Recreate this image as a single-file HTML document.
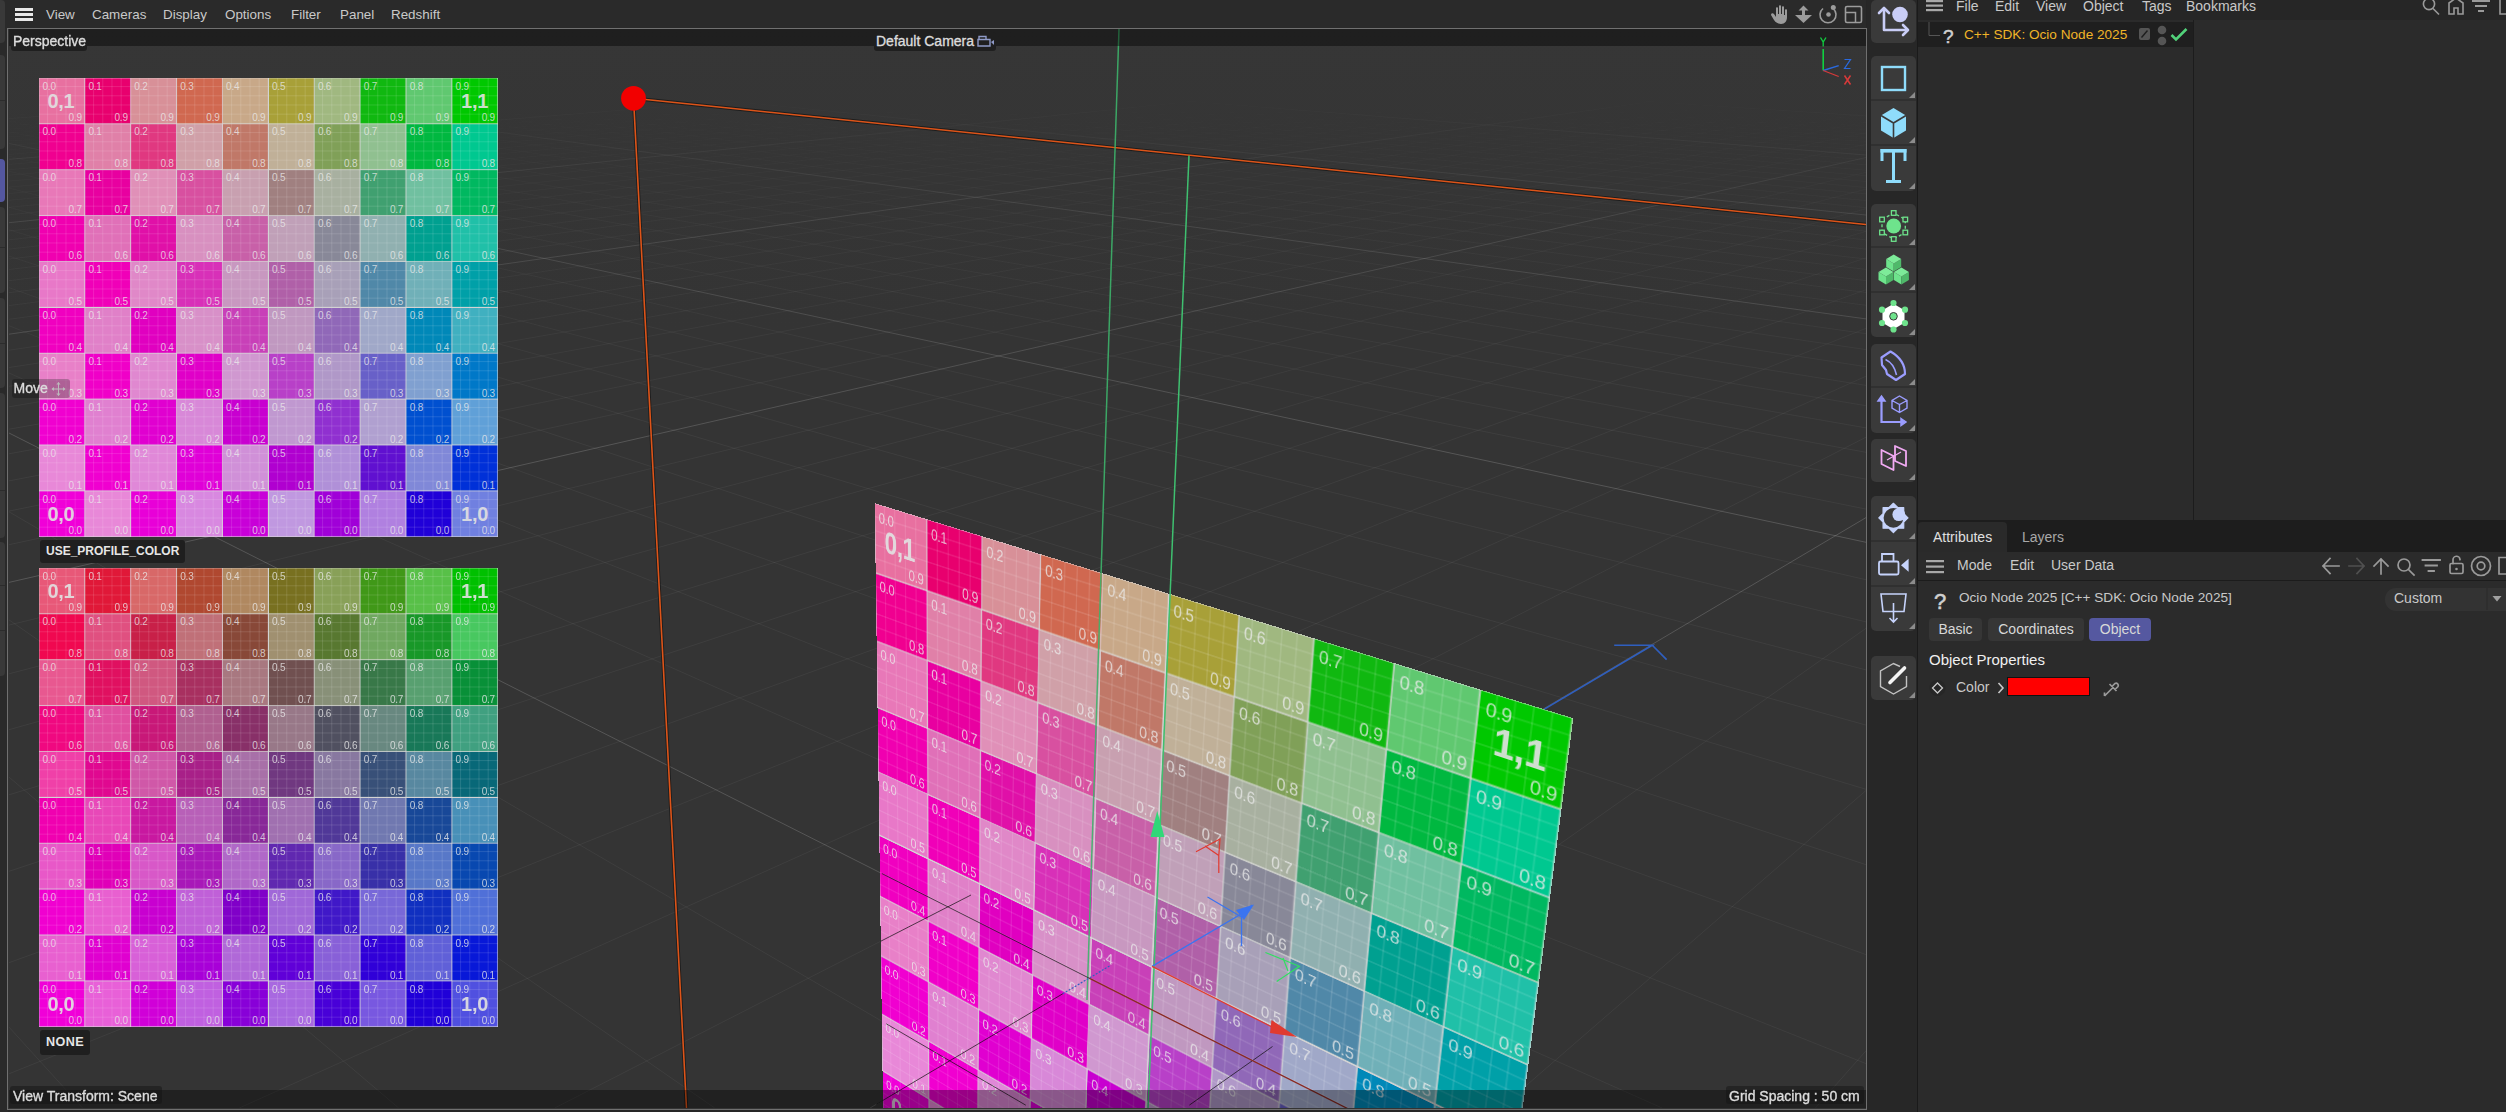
<!DOCTYPE html><html><head><meta charset="utf-8"><style>
*{box-sizing:border-box}
html,body{margin:0;padding:0}
body{width:2506px;height:1112px;overflow:hidden;position:relative;background:#262626;font-family:"Liberation Sans", sans-serif;color:#c8c8c8}
.a{position:absolute}
.g{position:absolute;background:#ccc}
.c{position:absolute;overflow:hidden;background-image:linear-gradient(to right,rgba(255,255,255,.13) 1px,transparent 1px),linear-gradient(to bottom,rgba(255,255,255,.13) 1px,transparent 1px);background-size:9.18px 9.18px;background-position:-1px -1px}
.c span{position:absolute;font-size:10px;line-height:10px;color:rgba(235,235,235,.78);letter-spacing:-0.2px}
.tl{left:3.5px;top:3.5px}
.br{right:3px;bottom:0.5px}
.gl{position:absolute;left:0;top:0;right:0;bottom:0;background-image:linear-gradient(to right,rgba(215,215,215,.75) 1.3px,transparent 1.3px),linear-gradient(to bottom,rgba(215,215,215,.75) 1.3px,transparent 1.3px);background-size:45.9px 45.9px;background-position:-0.6px -0.6px}
.pl .c{background-image:linear-gradient(to right,rgba(255,255,255,.11) 0.8px,transparent 0.8px),linear-gradient(to bottom,rgba(255,255,255,.11) 0.8px,transparent 0.8px)}
.pl .gl{background-image:linear-gradient(to right,rgba(215,215,215,.7) 1px,transparent 1px),linear-gradient(to bottom,rgba(215,215,215,.7) 1px,transparent 1px)}
.big{position:absolute;font-size:20px;line-height:20px;font-weight:bold;color:rgba(225,225,225,.92);letter-spacing:-0.3px}
.lbl{position:absolute;white-space:nowrap;background:#1e1e1e;color:#e6e6e6;font-size:13px;border-radius:3px;padding:0 5px;height:22px;line-height:22px}
.mi{position:absolute;font-size:13.4px;color:#c9c9c9;top:7px}
</style></head><body>
<div class="a" style="left:0;top:0;width:8px;height:1112px;background:#2a2a2a"></div>
<div class="a" style="left:0;top:0px;width:5px;height:43px;background:#393939;border-radius:0 4px 4px 0"></div>
<div class="a" style="left:0;top:55px;width:5px;height:94px;background:#393939;border-radius:0 4px 4px 0"></div>
<div class="a" style="left:0;top:159px;width:5px;height:43px;background:#5457a0;border-radius:0 4px 4px 0"></div>
<div class="a" style="left:0;top:207px;width:5px;height:86px;background:#393939;border-radius:0 4px 4px 0"></div>
<div class="a" style="left:0;top:298px;width:5px;height:90px;background:#393939;border-radius:0 4px 4px 0"></div>
<div class="a" style="left:0;top:393px;width:5px;height:145px;background:#393939;border-radius:0 4px 4px 0"></div>
<div class="a" style="left:0;top:542px;width:5px;height:134px;background:#393939;border-radius:0 4px 4px 0"></div>
<div class="a" style="left:0;top:100px;width:5px;height:1px;background:#2c2c2c"></div>
<div class="a" style="left:0;top:247px;width:5px;height:1px;background:#2c2c2c"></div>
<div class="a" style="left:0;top:343px;width:5px;height:1px;background:#2c2c2c"></div>
<div class="a" style="left:0;top:490px;width:5px;height:1px;background:#2c2c2c"></div>
<div class="a" style="left:0;top:585px;width:5px;height:1px;background:#2c2c2c"></div>
<div class="a" style="left:0;top:630px;width:5px;height:1px;background:#2c2c2c"></div>
<div class="a" style="left:8px;top:0;width:1858px;height:28px;background:#2a2a2a"></div>
<div class="a" style="left:15px;top:8px;width:18px;height:3px;background:#e8e8e8;box-shadow:0 5px 0 #e8e8e8,0 10px 0 #e8e8e8"></div>
<span class="mi" style="left:46px">View</span>
<span class="mi" style="left:92px">Cameras</span>
<span class="mi" style="left:163px">Display</span>
<span class="mi" style="left:225px">Options</span>
<span class="mi" style="left:291px">Filter</span>
<span class="mi" style="left:340px">Panel</span>
<span class="mi" style="left:391px">Redshift</span>
<div class="a" style="left:7px;top:28px;width:1860px;height:1082px;border:1px solid #707070;background:#343434"></div>
<div class="a" id="vp" style="left:0;top:0;width:2506px;height:1112px;clip-path:inset(29px 640px 4px 8px)">
<div class="a" style="left:9px;top:29px;width:1857px;height:300px;background:linear-gradient(#363636,#343434)"></div>
<svg class="a" style="left:0;top:0" width="2506" height="1112"><defs><linearGradient id="fade" x1="0" y1="0" x2="0" y2="1112" gradientUnits="userSpaceOnUse"><stop offset="0.085" stop-color="#fff" stop-opacity="0"/><stop offset="0.2" stop-color="#fff" stop-opacity="0.6"/><stop offset="0.4" stop-color="#fff" stop-opacity="1"/></linearGradient><mask id="fm"><rect x="0" y="0" width="2506" height="1112" fill="url(#fade)"/></mask></defs><g mask="url(#fm)">
<path d="M1866.0 40.8L1564.1 29.0M1866.0 42.0L1538.0 29.0M1866.0 43.2L1511.9 29.0M1866.0 44.4L1485.8 29.0M1866.0 45.6L1459.7 29.0M1866.0 46.9L1433.5 29.0M1866.0 48.2L1407.4 29.0M1866.0 49.5L1381.2 29.0M1866.0 50.8L1355.1 29.0M1866.0 53.6L1302.7 29.0M1866.0 55.1L1276.6 29.0M1866.0 56.5L1250.4 29.0M1866.0 58.1L1224.2 29.0M1866.0 59.6L1198.0 29.0M1866.0 61.2L1171.7 29.0M1866.0 62.8L1145.5 29.0M1866.0 64.5L1119.3 29.0M1866.0 66.2L1093.0 29.0M1866.0 69.8L1040.5 29.0M1866.0 71.6L1014.3 29.0M1866.0 73.5L988.0 29.0M1866.0 75.4L961.7 29.0M1866.0 77.4L935.4 29.0M1866.0 79.5L909.1 29.0M1866.0 81.6L882.8 29.0M1866.0 83.8L856.5 29.0M1866.0 86.0L830.2 29.0M1866.0 90.7L777.5 29.0M1866.0 93.2L751.2 29.0M1866.0 95.7L724.8 29.0M1866.0 98.3L698.4 29.0M1866.0 101.0L672.1 29.0M1866.0 103.8L645.7 29.0M1866.0 106.7L619.3 29.0M1866.0 109.6L592.9 29.0M1866.0 112.7L566.5 29.0M1866.0 119.2L513.6 29.0M1866.0 122.6L487.2 29.0M1866.0 126.1L460.8 29.0M1866.0 129.8L434.3 29.0M1866.0 133.6L407.9 29.0M1866.0 137.5L381.4 29.0M1866.0 141.6L354.9 29.0M1866.0 145.9L328.4 29.0M1866.0 150.4L302.0 29.0M1866.0 159.8L248.9 29.0M1866.0 164.9L222.4 29.0M1866.0 170.2L195.9 29.0M1866.0 175.7L169.4 29.0M1866.0 181.5L142.8 29.0M1866.0 187.5L116.3 29.0M1866.0 193.9L89.7 29.0M1866.0 200.6L63.2 29.0M1866.0 207.6L36.6 29.0M9.0 31.6L1866.0 222.9M9.0 34.5L1866.0 231.1M9.0 37.6L1866.0 239.9M9.0 40.8L1866.0 249.1M9.0 44.3L1866.0 259.0M9.0 47.9L1866.0 269.4M9.0 51.8L1866.0 280.6M9.0 56.0L1866.0 292.5M9.0 60.5L1866.0 305.3M9.0 70.4L1866.0 333.7M9.0 75.9L1866.0 349.6M9.0 82.0L1866.0 366.7M9.0 88.5L1866.0 385.4M9.0 95.6L1866.0 405.7M9.0 103.4L1866.0 427.9M9.0 111.9L1866.0 452.3M9.0 121.3L1866.0 479.2M9.0 131.8L1866.0 509.1M9.0 156.4L1866.0 579.7M9.0 171.2L1866.0 621.9M9.0 188.0L1866.0 669.9M9.0 207.3L1866.0 725.1M9.0 229.8L1866.0 789.3M9.0 256.1L1866.0 864.7M9.0 287.6L1866.0 954.6M9.0 325.7L1866.0 1063.6M9.0 373.0L1662.1 1108.0M9.0 511.8L1030.6 1108.0M9.0 619.9L714.7 1108.0M9.0 777.1L398.7 1108.0M9.0 1027.1L82.5 1108.0M1866.0 1050.8L1815.4 1108.0M1866.0 790.5L1500.4 1108.0M1866.0 628.3L1185.3 1108.0M1866.0 437.2L554.7 1108.0M1866.0 376.2L239.3 1108.0M9.0 1073.8L1866.0 328.3M9.0 962.7L1866.0 289.7M9.0 871.3L1866.0 257.9M9.0 794.8L1866.0 231.3M9.0 729.7L1866.0 208.7M9.0 673.8L1866.0 189.2M9.0 625.1L1866.0 172.3M9.0 544.7L1866.0 144.4M9.0 511.1L1866.0 132.7M9.0 480.9L1866.0 122.2M9.0 453.8L1866.0 112.8M9.0 429.2L1866.0 104.2M9.0 406.8L1866.0 96.4M9.0 386.3L1866.0 89.3M9.0 367.5L1866.0 82.8M9.0 350.2L1866.0 76.7M9.0 319.3L1866.0 66.0M9.0 305.6L1866.0 61.2M9.0 292.7L1866.0 56.8M9.0 280.7L1866.0 52.6M9.0 269.5L1866.0 48.7M9.0 259.0L1866.0 45.0M9.0 249.1L1866.0 41.6M9.0 239.8L1866.0 38.4M9.0 231.0L1866.0 35.3M9.0 214.8L1866.0 29.7M9.0 207.3L1846.4 29.0M9.0 200.3L1819.8 29.0M9.0 193.5L1793.3 29.0M9.0 187.1L1766.8 29.0M9.0 181.1L1740.2 29.0M9.0 175.2L1713.7 29.0M9.0 169.7L1687.1 29.0M9.0 164.4L1660.6 29.0M9.0 154.4L1607.4 29.0M9.0 149.8L1580.8 29.0M9.0 145.3L1554.2 29.0M9.0 141.0L1527.6 29.0M9.0 136.9L1501.0 29.0M9.0 132.9L1474.4 29.0M9.0 129.1L1447.7 29.0M9.0 125.4L1421.1 29.0M9.0 121.9L1394.5 29.0M9.0 115.2L1341.1 29.0M9.0 112.0L1314.5 29.0M9.0 108.9L1287.8 29.0M9.0 105.9L1261.1 29.0M9.0 103.0L1234.4 29.0M9.0 100.3L1207.7 29.0M9.0 97.6L1180.9 29.0M9.0 94.9L1154.2 29.0M9.0 92.4L1127.5 29.0M9.0 87.6L1074.0 29.0M9.0 85.2L1047.2 29.0M9.0 83.0L1020.5 29.0M9.0 80.8L993.7 29.0M9.0 78.7L966.9 29.0M9.0 76.6L940.1 29.0M9.0 74.6L913.3 29.0M9.0 72.7L886.5 29.0M9.0 70.7L859.7 29.0M9.0 67.1L806.0 29.0M9.0 65.3L779.1 29.0M9.0 63.6L752.3 29.0M9.0 61.9L725.4 29.0M9.0 60.3L698.5 29.0M9.0 58.7L671.7 29.0M9.0 57.2L644.8 29.0M9.0 55.7L617.9 29.0M9.0 54.2L591.0 29.0M9.0 51.3L537.1 29.0M9.0 49.9L510.2 29.0M9.0 48.6L483.2 29.0M9.0 47.3L456.3 29.0M9.0 46.0L429.3 29.0M9.0 44.7L402.4 29.0M9.0 43.5L375.4 29.0M9.0 42.3L348.4 29.0M9.0 41.1L321.4 29.0" stroke="rgba(255,255,255,0.052)" stroke-width="1" fill="none"/>
<path d="M1866.0 39.7L1590.2 29.0M1866.0 52.2L1328.9 29.0M1866.0 68.0L1066.8 29.0M1866.0 88.4L803.9 29.0M1866.0 115.9L540.1 29.0M1866.0 155.0L275.5 29.0M1866.0 215.0L10.0 29.0M9.0 65.2L1866.0 318.9M9.0 143.4L1866.0 542.3M9.0 433.0L1346.4 1108.0M1866.0 517.6L870.1 1108.0M9.0 582.4L1866.0 157.5M9.0 334.2L1866.0 71.2M9.0 222.7L1866.0 32.4M9.0 159.3L1634.0 29.0M9.0 118.5L1367.8 29.0M9.0 89.9L1100.7 29.0M9.0 68.9L832.8 29.0M9.0 52.7L564.0 29.0" stroke="rgba(255,255,255,0.17)" stroke-width="1" fill="none"/>
</g></svg>
<div class="a pl" style="left:0;top:0;width:459px;height:459px;transform-origin:0 0;transform:matrix3d(0.590219943,0.0431247684,0,-0.0005922732,0.288561467,1.70215712,0,0.000305516458,0,0,1,0,874.691865,503.134656,0,1)">
<div class="g" style="left:0px;top:0px;width:459.0px;height:459.0px"><div class="c" style="left:0.00px;top:0.00px;width:45.90px;height:45.90px;background-color:#e870a0"><span class="tl">0.0</span><span class="br">0.9</span></div><div class="c" style="left:45.90px;top:0.00px;width:45.90px;height:45.90px;background-color:#e8006e"><span class="tl">0.1</span><span class="br">0.9</span></div><div class="c" style="left:91.80px;top:0.00px;width:45.90px;height:45.90px;background-color:#d89098"><span class="tl">0.2</span><span class="br">0.9</span></div><div class="c" style="left:137.70px;top:0.00px;width:45.90px;height:45.90px;background-color:#d06850"><span class="tl">0.3</span><span class="br">0.9</span></div><div class="c" style="left:183.60px;top:0.00px;width:45.90px;height:45.90px;background-color:#c8a888"><span class="tl">0.4</span><span class="br">0.9</span></div><div class="c" style="left:229.50px;top:0.00px;width:45.90px;height:45.90px;background-color:#a8a038"><span class="tl">0.5</span><span class="br">0.9</span></div><div class="c" style="left:275.40px;top:0.00px;width:45.90px;height:45.90px;background-color:#a0b880"><span class="tl">0.6</span><span class="br">0.9</span></div><div class="c" style="left:321.30px;top:0.00px;width:45.90px;height:45.90px;background-color:#10b810"><span class="tl">0.7</span><span class="br">0.9</span></div><div class="c" style="left:367.20px;top:0.00px;width:45.90px;height:45.90px;background-color:#60c870"><span class="tl">0.8</span><span class="br">0.9</span></div><div class="c" style="left:413.10px;top:0.00px;width:45.90px;height:45.90px;background-color:#00c800"><span class="tl">0.9</span><span class="br">0.9</span></div><div class="c" style="left:0.00px;top:45.90px;width:45.90px;height:45.90px;background-color:#f00090"><span class="tl">0.0</span><span class="br">0.8</span></div><div class="c" style="left:45.90px;top:45.90px;width:45.90px;height:45.90px;background-color:#e080a8"><span class="tl">0.1</span><span class="br">0.8</span></div><div class="c" style="left:91.80px;top:45.90px;width:45.90px;height:45.90px;background-color:#e03880"><span class="tl">0.2</span><span class="br">0.8</span></div><div class="c" style="left:137.70px;top:45.90px;width:45.90px;height:45.90px;background-color:#d0a0a8"><span class="tl">0.3</span><span class="br">0.8</span></div><div class="c" style="left:183.60px;top:45.90px;width:45.90px;height:45.90px;background-color:#c07868"><span class="tl">0.4</span><span class="br">0.8</span></div><div class="c" style="left:229.50px;top:45.90px;width:45.90px;height:45.90px;background-color:#c0b098"><span class="tl">0.5</span><span class="br">0.8</span></div><div class="c" style="left:275.40px;top:45.90px;width:45.90px;height:45.90px;background-color:#80a058"><span class="tl">0.6</span><span class="br">0.8</span></div><div class="c" style="left:321.30px;top:45.90px;width:45.90px;height:45.90px;background-color:#90c090"><span class="tl">0.7</span><span class="br">0.8</span></div><div class="c" style="left:367.20px;top:45.90px;width:45.90px;height:45.90px;background-color:#00b840"><span class="tl">0.8</span><span class="br">0.8</span></div><div class="c" style="left:413.10px;top:45.90px;width:45.90px;height:45.90px;background-color:#00c890"><span class="tl">0.9</span><span class="br">0.8</span></div><div class="c" style="left:0.00px;top:91.80px;width:45.90px;height:45.90px;background-color:#e878b8"><span class="tl">0.0</span><span class="br">0.7</span></div><div class="c" style="left:45.90px;top:91.80px;width:45.90px;height:45.90px;background-color:#e800a0"><span class="tl">0.1</span><span class="br">0.7</span></div><div class="c" style="left:91.80px;top:91.80px;width:45.90px;height:45.90px;background-color:#e090b8"><span class="tl">0.2</span><span class="br">0.7</span></div><div class="c" style="left:137.70px;top:91.80px;width:45.90px;height:45.90px;background-color:#d850a0"><span class="tl">0.3</span><span class="br">0.7</span></div><div class="c" style="left:183.60px;top:91.80px;width:45.90px;height:45.90px;background-color:#c8a0b0"><span class="tl">0.4</span><span class="br">0.7</span></div><div class="c" style="left:229.50px;top:91.80px;width:45.90px;height:45.90px;background-color:#a08080"><span class="tl">0.5</span><span class="br">0.7</span></div><div class="c" style="left:275.40px;top:91.80px;width:45.90px;height:45.90px;background-color:#a8b0a0"><span class="tl">0.6</span><span class="br">0.7</span></div><div class="c" style="left:321.30px;top:91.80px;width:45.90px;height:45.90px;background-color:#40a070"><span class="tl">0.7</span><span class="br">0.7</span></div><div class="c" style="left:367.20px;top:91.80px;width:45.90px;height:45.90px;background-color:#70c0a0"><span class="tl">0.8</span><span class="br">0.7</span></div><div class="c" style="left:413.10px;top:91.80px;width:45.90px;height:45.90px;background-color:#00b860"><span class="tl">0.9</span><span class="br">0.7</span></div><div class="c" style="left:0.00px;top:137.70px;width:45.90px;height:45.90px;background-color:#f000b0"><span class="tl">0.0</span><span class="br">0.6</span></div><div class="c" style="left:45.90px;top:137.70px;width:45.90px;height:45.90px;background-color:#e070b8"><span class="tl">0.1</span><span class="br">0.6</span></div><div class="c" style="left:91.80px;top:137.70px;width:45.90px;height:45.90px;background-color:#e010a8"><span class="tl">0.2</span><span class="br">0.6</span></div><div class="c" style="left:137.70px;top:137.70px;width:45.90px;height:45.90px;background-color:#d890c0"><span class="tl">0.3</span><span class="br">0.6</span></div><div class="c" style="left:183.60px;top:137.70px;width:45.90px;height:45.90px;background-color:#c860a8"><span class="tl">0.4</span><span class="br">0.6</span></div><div class="c" style="left:229.50px;top:137.70px;width:45.90px;height:45.90px;background-color:#c0a0b8"><span class="tl">0.5</span><span class="br">0.6</span></div><div class="c" style="left:275.40px;top:137.70px;width:45.90px;height:45.90px;background-color:#888898"><span class="tl">0.6</span><span class="br">0.6</span></div><div class="c" style="left:321.30px;top:137.70px;width:45.90px;height:45.90px;background-color:#90b0b0"><span class="tl">0.7</span><span class="br">0.6</span></div><div class="c" style="left:367.20px;top:137.70px;width:45.90px;height:45.90px;background-color:#00a090"><span class="tl">0.8</span><span class="br">0.6</span></div><div class="c" style="left:413.10px;top:137.70px;width:45.90px;height:45.90px;background-color:#20c0a8"><span class="tl">0.9</span><span class="br">0.6</span></div><div class="c" style="left:0.00px;top:183.60px;width:45.90px;height:45.90px;background-color:#e878c8"><span class="tl">0.0</span><span class="br">0.5</span></div><div class="c" style="left:45.90px;top:183.60px;width:45.90px;height:45.90px;background-color:#f000b8"><span class="tl">0.1</span><span class="br">0.5</span></div><div class="c" style="left:91.80px;top:183.60px;width:45.90px;height:45.90px;background-color:#e088c8"><span class="tl">0.2</span><span class="br">0.5</span></div><div class="c" style="left:137.70px;top:183.60px;width:45.90px;height:45.90px;background-color:#d830b8"><span class="tl">0.3</span><span class="br">0.5</span></div><div class="c" style="left:183.60px;top:183.60px;width:45.90px;height:45.90px;background-color:#c898c0"><span class="tl">0.4</span><span class="br">0.5</span></div><div class="c" style="left:229.50px;top:183.60px;width:45.90px;height:45.90px;background-color:#b060a8"><span class="tl">0.5</span><span class="br">0.5</span></div><div class="c" style="left:275.40px;top:183.60px;width:45.90px;height:45.90px;background-color:#a8a0b8"><span class="tl">0.6</span><span class="br">0.5</span></div><div class="c" style="left:321.30px;top:183.60px;width:45.90px;height:45.90px;background-color:#5088a8"><span class="tl">0.7</span><span class="br">0.5</span></div><div class="c" style="left:367.20px;top:183.60px;width:45.90px;height:45.90px;background-color:#70b0b8"><span class="tl">0.8</span><span class="br">0.5</span></div><div class="c" style="left:413.10px;top:183.60px;width:45.90px;height:45.90px;background-color:#00a0a8"><span class="tl">0.9</span><span class="br">0.5</span></div><div class="c" style="left:0.00px;top:229.50px;width:45.90px;height:45.90px;background-color:#f000c0"><span class="tl">0.0</span><span class="br">0.4</span></div><div class="c" style="left:45.90px;top:229.50px;width:45.90px;height:45.90px;background-color:#e080c8"><span class="tl">0.1</span><span class="br">0.4</span></div><div class="c" style="left:91.80px;top:229.50px;width:45.90px;height:45.90px;background-color:#e000c0"><span class="tl">0.2</span><span class="br">0.4</span></div><div class="c" style="left:137.70px;top:229.50px;width:45.90px;height:45.90px;background-color:#d890c8"><span class="tl">0.3</span><span class="br">0.4</span></div><div class="c" style="left:183.60px;top:229.50px;width:45.90px;height:45.90px;background-color:#c840b8"><span class="tl">0.4</span><span class="br">0.4</span></div><div class="c" style="left:229.50px;top:229.50px;width:45.90px;height:45.90px;background-color:#c098c0"><span class="tl">0.5</span><span class="br">0.4</span></div><div class="c" style="left:275.40px;top:229.50px;width:45.90px;height:45.90px;background-color:#9068b8"><span class="tl">0.6</span><span class="br">0.4</span></div><div class="c" style="left:321.30px;top:229.50px;width:45.90px;height:45.90px;background-color:#a0a8c8"><span class="tl">0.7</span><span class="br">0.4</span></div><div class="c" style="left:367.20px;top:229.50px;width:45.90px;height:45.90px;background-color:#0088b8"><span class="tl">0.8</span><span class="br">0.4</span></div><div class="c" style="left:413.10px;top:229.50px;width:45.90px;height:45.90px;background-color:#40b0c0"><span class="tl">0.9</span><span class="br">0.4</span></div><div class="c" style="left:0.00px;top:275.40px;width:45.90px;height:45.90px;background-color:#e880c8"><span class="tl">0.0</span><span class="br">0.3</span></div><div class="c" style="left:45.90px;top:275.40px;width:45.90px;height:45.90px;background-color:#f000c8"><span class="tl">0.1</span><span class="br">0.3</span></div><div class="c" style="left:91.80px;top:275.40px;width:45.90px;height:45.90px;background-color:#e088d0"><span class="tl">0.2</span><span class="br">0.3</span></div><div class="c" style="left:137.70px;top:275.40px;width:45.90px;height:45.90px;background-color:#e000c8"><span class="tl">0.3</span><span class="br">0.3</span></div><div class="c" style="left:183.60px;top:275.40px;width:45.90px;height:45.90px;background-color:#d098d0"><span class="tl">0.4</span><span class="br">0.3</span></div><div class="c" style="left:229.50px;top:275.40px;width:45.90px;height:45.90px;background-color:#b840c8"><span class="tl">0.5</span><span class="br">0.3</span></div><div class="c" style="left:275.40px;top:275.40px;width:45.90px;height:45.90px;background-color:#b098c8"><span class="tl">0.6</span><span class="br">0.3</span></div><div class="c" style="left:321.30px;top:275.40px;width:45.90px;height:45.90px;background-color:#6860c8"><span class="tl">0.7</span><span class="br">0.3</span></div><div class="c" style="left:367.20px;top:275.40px;width:45.90px;height:45.90px;background-color:#80a0d0"><span class="tl">0.8</span><span class="br">0.3</span></div><div class="c" style="left:413.10px;top:275.40px;width:45.90px;height:45.90px;background-color:#0078c8"><span class="tl">0.9</span><span class="br">0.3</span></div><div class="c" style="left:0.00px;top:321.30px;width:45.90px;height:45.90px;background-color:#f000d0"><span class="tl">0.0</span><span class="br">0.2</span></div><div class="c" style="left:45.90px;top:321.30px;width:45.90px;height:45.90px;background-color:#e080d0"><span class="tl">0.1</span><span class="br">0.2</span></div><div class="c" style="left:91.80px;top:321.30px;width:45.90px;height:45.90px;background-color:#e000d0"><span class="tl">0.2</span><span class="br">0.2</span></div><div class="c" style="left:137.70px;top:321.30px;width:45.90px;height:45.90px;background-color:#d888d8"><span class="tl">0.3</span><span class="br">0.2</span></div><div class="c" style="left:183.60px;top:321.30px;width:45.90px;height:45.90px;background-color:#c800d0"><span class="tl">0.4</span><span class="br">0.2</span></div><div class="c" style="left:229.50px;top:321.30px;width:45.90px;height:45.90px;background-color:#c098d0"><span class="tl">0.5</span><span class="br">0.2</span></div><div class="c" style="left:275.40px;top:321.30px;width:45.90px;height:45.90px;background-color:#9030d0"><span class="tl">0.6</span><span class="br">0.2</span></div><div class="c" style="left:321.30px;top:321.30px;width:45.90px;height:45.90px;background-color:#b0a0d0"><span class="tl">0.7</span><span class="br">0.2</span></div><div class="c" style="left:367.20px;top:321.30px;width:45.90px;height:45.90px;background-color:#0050d0"><span class="tl">0.8</span><span class="br">0.2</span></div><div class="c" style="left:413.10px;top:321.30px;width:45.90px;height:45.90px;background-color:#60a0d8"><span class="tl">0.9</span><span class="br">0.2</span></div><div class="c" style="left:0.00px;top:367.20px;width:45.90px;height:45.90px;background-color:#e888d8"><span class="tl">0.0</span><span class="br">0.1</span></div><div class="c" style="left:45.90px;top:367.20px;width:45.90px;height:45.90px;background-color:#f000d0"><span class="tl">0.1</span><span class="br">0.1</span></div><div class="c" style="left:91.80px;top:367.20px;width:45.90px;height:45.90px;background-color:#e088d8"><span class="tl">0.2</span><span class="br">0.1</span></div><div class="c" style="left:137.70px;top:367.20px;width:45.90px;height:45.90px;background-color:#e000d8"><span class="tl">0.3</span><span class="br">0.1</span></div><div class="c" style="left:183.60px;top:367.20px;width:45.90px;height:45.90px;background-color:#d090d8"><span class="tl">0.4</span><span class="br">0.1</span></div><div class="c" style="left:229.50px;top:367.20px;width:45.90px;height:45.90px;background-color:#b000d0"><span class="tl">0.5</span><span class="br">0.1</span></div><div class="c" style="left:275.40px;top:367.20px;width:45.90px;height:45.90px;background-color:#b090d8"><span class="tl">0.6</span><span class="br">0.1</span></div><div class="c" style="left:321.30px;top:367.20px;width:45.90px;height:45.90px;background-color:#6010d0"><span class="tl">0.7</span><span class="br">0.1</span></div><div class="c" style="left:367.20px;top:367.20px;width:45.90px;height:45.90px;background-color:#8088d8"><span class="tl">0.8</span><span class="br">0.1</span></div><div class="c" style="left:413.10px;top:367.20px;width:45.90px;height:45.90px;background-color:#0030d8"><span class="tl">0.9</span><span class="br">0.1</span></div><div class="c" style="left:0.00px;top:413.10px;width:45.90px;height:45.90px;background-color:#f000d8"><span class="tl">0.0</span><span class="br">0.0</span></div><div class="c" style="left:45.90px;top:413.10px;width:45.90px;height:45.90px;background-color:#e888d8"><span class="tl">0.1</span><span class="br">0.0</span></div><div class="c" style="left:91.80px;top:413.10px;width:45.90px;height:45.90px;background-color:#e800d8"><span class="tl">0.2</span><span class="br">0.0</span></div><div class="c" style="left:137.70px;top:413.10px;width:45.90px;height:45.90px;background-color:#d888e0"><span class="tl">0.3</span><span class="br">0.0</span></div><div class="c" style="left:183.60px;top:413.10px;width:45.90px;height:45.90px;background-color:#c800d8"><span class="tl">0.4</span><span class="br">0.0</span></div><div class="c" style="left:229.50px;top:413.10px;width:45.90px;height:45.90px;background-color:#c098e0"><span class="tl">0.5</span><span class="br">0.0</span></div><div class="c" style="left:275.40px;top:413.10px;width:45.90px;height:45.90px;background-color:#a000d8"><span class="tl">0.6</span><span class="br">0.0</span></div><div class="c" style="left:321.30px;top:413.10px;width:45.90px;height:45.90px;background-color:#b080e0"><span class="tl">0.7</span><span class="br">0.0</span></div><div class="c" style="left:367.20px;top:413.10px;width:45.90px;height:45.90px;background-color:#2000d8"><span class="tl">0.8</span><span class="br">0.0</span></div><div class="c" style="left:413.10px;top:413.10px;width:45.90px;height:45.90px;background-color:#7080e0"><span class="tl">0.9</span><span class="br">0.0</span></div><div class="gl"></div><span class="big" style="left:8.5px;top:13px">0,1</span><span class="big" style="left:422.1px;top:13px">1,1</span><span class="big" style="left:8.5px;top:426.1px">0,0</span><span class="big" style="left:422.1px;top:426.1px">1,0</span></div>
</div>
<svg class="a" style="left:0;top:0" width="2506" height="1112">
<path d="M633.5 98.3L1866 224.5M633.5 98.3L686.5 1108" stroke="#151515" stroke-width="3.4" fill="none" opacity=".75"/>
<path d="M633.5 98.3L1866 224.5M633.5 98.3L686.5 1108" stroke="#dd5419" stroke-width="1.6" fill="none"/>
<circle cx="633.5" cy="98.3" r="12.4" fill="#f20000"/>
<path d="M1119 28.8L1087 1000" stroke="#3db36a" stroke-width="1.5" fill="none" opacity=".9"/>
<path d="M1189 155.6L1148 1108" stroke="#3fc070" stroke-width="1.5" fill="none"/>
</svg>
<svg class="a" style="left:0;top:0" width="2506" height="1112"><path d="M881.8 873.5L1089.1 978.1M971.0 895.0L880.6 941.3M886.3 1023.8L1025.8 1105.2M1062.9 993.7L876.3 1104.3M1272.5 1046.5L1189.4 1105.1" stroke="#101010" stroke-width="1" fill="none" opacity=".7"/><path d="M1089.1 978.1L1363.5 1116.6" stroke="#8a2a22" stroke-width="1.3" fill="none"/><path d="M1109.5 966.0L1062.9 993.7" stroke="#3060c0" stroke-width="1.2" stroke-dasharray="2 1.5" fill="none"/><path d="M1544.4 709.1L1652.3 645.2L1614.2 645.2M1652.3 645.2L1666.6 659.6" stroke="#2f5fc0" stroke-width="1.6" fill="none"/><path d="M1152 966.3L1248 910" stroke="#3a74f0" stroke-width="1.4" fill="none"/><path d="M1254 904.5L1236 910L1244 920Z" fill="#3a74f0"/><path d="M1207.5 897L1241.5 917L1241.5 946M1241.5 917L1252 905" stroke="#3a74f0" stroke-width="1.3" fill="none"/><path d="M1152 966.3L1274 1028" stroke="#e03a30" stroke-width="1.4" fill="none"/><path d="M1297 1037L1271.5 1020L1270 1033Z" fill="#e03a30"/><path d="M1196 851.8L1220 839L1218.8 855.5L1218.8 873M1218.8 855.5L1205 846" stroke="#e03a30" stroke-width="1.2" fill="none"/><path d="M1265.4 952.5L1299.4 966.3L1276.7 981.5M1283 958L1288 971" stroke="#30e060" stroke-width="1.2" fill="none"/><path d="M1157.2 811L1150.5 837L1164.5 837Z" fill="#30d878"/></svg>
<div class="g" style="left:39px;top:78px;width:459.0px;height:459.0px"><div class="c" style="left:0.00px;top:0.00px;width:45.90px;height:45.90px;background-color:#e870a0"><span class="tl">0.0</span><span class="br">0.9</span></div><div class="c" style="left:45.90px;top:0.00px;width:45.90px;height:45.90px;background-color:#e8006e"><span class="tl">0.1</span><span class="br">0.9</span></div><div class="c" style="left:91.80px;top:0.00px;width:45.90px;height:45.90px;background-color:#d89098"><span class="tl">0.2</span><span class="br">0.9</span></div><div class="c" style="left:137.70px;top:0.00px;width:45.90px;height:45.90px;background-color:#d06850"><span class="tl">0.3</span><span class="br">0.9</span></div><div class="c" style="left:183.60px;top:0.00px;width:45.90px;height:45.90px;background-color:#c8a888"><span class="tl">0.4</span><span class="br">0.9</span></div><div class="c" style="left:229.50px;top:0.00px;width:45.90px;height:45.90px;background-color:#a8a038"><span class="tl">0.5</span><span class="br">0.9</span></div><div class="c" style="left:275.40px;top:0.00px;width:45.90px;height:45.90px;background-color:#a0b880"><span class="tl">0.6</span><span class="br">0.9</span></div><div class="c" style="left:321.30px;top:0.00px;width:45.90px;height:45.90px;background-color:#10b810"><span class="tl">0.7</span><span class="br">0.9</span></div><div class="c" style="left:367.20px;top:0.00px;width:45.90px;height:45.90px;background-color:#60c870"><span class="tl">0.8</span><span class="br">0.9</span></div><div class="c" style="left:413.10px;top:0.00px;width:45.90px;height:45.90px;background-color:#00c800"><span class="tl">0.9</span><span class="br">0.9</span></div><div class="c" style="left:0.00px;top:45.90px;width:45.90px;height:45.90px;background-color:#f00090"><span class="tl">0.0</span><span class="br">0.8</span></div><div class="c" style="left:45.90px;top:45.90px;width:45.90px;height:45.90px;background-color:#e080a8"><span class="tl">0.1</span><span class="br">0.8</span></div><div class="c" style="left:91.80px;top:45.90px;width:45.90px;height:45.90px;background-color:#e03880"><span class="tl">0.2</span><span class="br">0.8</span></div><div class="c" style="left:137.70px;top:45.90px;width:45.90px;height:45.90px;background-color:#d0a0a8"><span class="tl">0.3</span><span class="br">0.8</span></div><div class="c" style="left:183.60px;top:45.90px;width:45.90px;height:45.90px;background-color:#c07868"><span class="tl">0.4</span><span class="br">0.8</span></div><div class="c" style="left:229.50px;top:45.90px;width:45.90px;height:45.90px;background-color:#c0b098"><span class="tl">0.5</span><span class="br">0.8</span></div><div class="c" style="left:275.40px;top:45.90px;width:45.90px;height:45.90px;background-color:#80a058"><span class="tl">0.6</span><span class="br">0.8</span></div><div class="c" style="left:321.30px;top:45.90px;width:45.90px;height:45.90px;background-color:#90c090"><span class="tl">0.7</span><span class="br">0.8</span></div><div class="c" style="left:367.20px;top:45.90px;width:45.90px;height:45.90px;background-color:#00b840"><span class="tl">0.8</span><span class="br">0.8</span></div><div class="c" style="left:413.10px;top:45.90px;width:45.90px;height:45.90px;background-color:#00c890"><span class="tl">0.9</span><span class="br">0.8</span></div><div class="c" style="left:0.00px;top:91.80px;width:45.90px;height:45.90px;background-color:#e878b8"><span class="tl">0.0</span><span class="br">0.7</span></div><div class="c" style="left:45.90px;top:91.80px;width:45.90px;height:45.90px;background-color:#e800a0"><span class="tl">0.1</span><span class="br">0.7</span></div><div class="c" style="left:91.80px;top:91.80px;width:45.90px;height:45.90px;background-color:#e090b8"><span class="tl">0.2</span><span class="br">0.7</span></div><div class="c" style="left:137.70px;top:91.80px;width:45.90px;height:45.90px;background-color:#d850a0"><span class="tl">0.3</span><span class="br">0.7</span></div><div class="c" style="left:183.60px;top:91.80px;width:45.90px;height:45.90px;background-color:#c8a0b0"><span class="tl">0.4</span><span class="br">0.7</span></div><div class="c" style="left:229.50px;top:91.80px;width:45.90px;height:45.90px;background-color:#a08080"><span class="tl">0.5</span><span class="br">0.7</span></div><div class="c" style="left:275.40px;top:91.80px;width:45.90px;height:45.90px;background-color:#a8b0a0"><span class="tl">0.6</span><span class="br">0.7</span></div><div class="c" style="left:321.30px;top:91.80px;width:45.90px;height:45.90px;background-color:#40a070"><span class="tl">0.7</span><span class="br">0.7</span></div><div class="c" style="left:367.20px;top:91.80px;width:45.90px;height:45.90px;background-color:#70c0a0"><span class="tl">0.8</span><span class="br">0.7</span></div><div class="c" style="left:413.10px;top:91.80px;width:45.90px;height:45.90px;background-color:#00b860"><span class="tl">0.9</span><span class="br">0.7</span></div><div class="c" style="left:0.00px;top:137.70px;width:45.90px;height:45.90px;background-color:#f000b0"><span class="tl">0.0</span><span class="br">0.6</span></div><div class="c" style="left:45.90px;top:137.70px;width:45.90px;height:45.90px;background-color:#e070b8"><span class="tl">0.1</span><span class="br">0.6</span></div><div class="c" style="left:91.80px;top:137.70px;width:45.90px;height:45.90px;background-color:#e010a8"><span class="tl">0.2</span><span class="br">0.6</span></div><div class="c" style="left:137.70px;top:137.70px;width:45.90px;height:45.90px;background-color:#d890c0"><span class="tl">0.3</span><span class="br">0.6</span></div><div class="c" style="left:183.60px;top:137.70px;width:45.90px;height:45.90px;background-color:#c860a8"><span class="tl">0.4</span><span class="br">0.6</span></div><div class="c" style="left:229.50px;top:137.70px;width:45.90px;height:45.90px;background-color:#c0a0b8"><span class="tl">0.5</span><span class="br">0.6</span></div><div class="c" style="left:275.40px;top:137.70px;width:45.90px;height:45.90px;background-color:#888898"><span class="tl">0.6</span><span class="br">0.6</span></div><div class="c" style="left:321.30px;top:137.70px;width:45.90px;height:45.90px;background-color:#90b0b0"><span class="tl">0.7</span><span class="br">0.6</span></div><div class="c" style="left:367.20px;top:137.70px;width:45.90px;height:45.90px;background-color:#00a090"><span class="tl">0.8</span><span class="br">0.6</span></div><div class="c" style="left:413.10px;top:137.70px;width:45.90px;height:45.90px;background-color:#20c0a8"><span class="tl">0.9</span><span class="br">0.6</span></div><div class="c" style="left:0.00px;top:183.60px;width:45.90px;height:45.90px;background-color:#e878c8"><span class="tl">0.0</span><span class="br">0.5</span></div><div class="c" style="left:45.90px;top:183.60px;width:45.90px;height:45.90px;background-color:#f000b8"><span class="tl">0.1</span><span class="br">0.5</span></div><div class="c" style="left:91.80px;top:183.60px;width:45.90px;height:45.90px;background-color:#e088c8"><span class="tl">0.2</span><span class="br">0.5</span></div><div class="c" style="left:137.70px;top:183.60px;width:45.90px;height:45.90px;background-color:#d830b8"><span class="tl">0.3</span><span class="br">0.5</span></div><div class="c" style="left:183.60px;top:183.60px;width:45.90px;height:45.90px;background-color:#c898c0"><span class="tl">0.4</span><span class="br">0.5</span></div><div class="c" style="left:229.50px;top:183.60px;width:45.90px;height:45.90px;background-color:#b060a8"><span class="tl">0.5</span><span class="br">0.5</span></div><div class="c" style="left:275.40px;top:183.60px;width:45.90px;height:45.90px;background-color:#a8a0b8"><span class="tl">0.6</span><span class="br">0.5</span></div><div class="c" style="left:321.30px;top:183.60px;width:45.90px;height:45.90px;background-color:#5088a8"><span class="tl">0.7</span><span class="br">0.5</span></div><div class="c" style="left:367.20px;top:183.60px;width:45.90px;height:45.90px;background-color:#70b0b8"><span class="tl">0.8</span><span class="br">0.5</span></div><div class="c" style="left:413.10px;top:183.60px;width:45.90px;height:45.90px;background-color:#00a0a8"><span class="tl">0.9</span><span class="br">0.5</span></div><div class="c" style="left:0.00px;top:229.50px;width:45.90px;height:45.90px;background-color:#f000c0"><span class="tl">0.0</span><span class="br">0.4</span></div><div class="c" style="left:45.90px;top:229.50px;width:45.90px;height:45.90px;background-color:#e080c8"><span class="tl">0.1</span><span class="br">0.4</span></div><div class="c" style="left:91.80px;top:229.50px;width:45.90px;height:45.90px;background-color:#e000c0"><span class="tl">0.2</span><span class="br">0.4</span></div><div class="c" style="left:137.70px;top:229.50px;width:45.90px;height:45.90px;background-color:#d890c8"><span class="tl">0.3</span><span class="br">0.4</span></div><div class="c" style="left:183.60px;top:229.50px;width:45.90px;height:45.90px;background-color:#c840b8"><span class="tl">0.4</span><span class="br">0.4</span></div><div class="c" style="left:229.50px;top:229.50px;width:45.90px;height:45.90px;background-color:#c098c0"><span class="tl">0.5</span><span class="br">0.4</span></div><div class="c" style="left:275.40px;top:229.50px;width:45.90px;height:45.90px;background-color:#9068b8"><span class="tl">0.6</span><span class="br">0.4</span></div><div class="c" style="left:321.30px;top:229.50px;width:45.90px;height:45.90px;background-color:#a0a8c8"><span class="tl">0.7</span><span class="br">0.4</span></div><div class="c" style="left:367.20px;top:229.50px;width:45.90px;height:45.90px;background-color:#0088b8"><span class="tl">0.8</span><span class="br">0.4</span></div><div class="c" style="left:413.10px;top:229.50px;width:45.90px;height:45.90px;background-color:#40b0c0"><span class="tl">0.9</span><span class="br">0.4</span></div><div class="c" style="left:0.00px;top:275.40px;width:45.90px;height:45.90px;background-color:#e880c8"><span class="tl">0.0</span><span class="br">0.3</span></div><div class="c" style="left:45.90px;top:275.40px;width:45.90px;height:45.90px;background-color:#f000c8"><span class="tl">0.1</span><span class="br">0.3</span></div><div class="c" style="left:91.80px;top:275.40px;width:45.90px;height:45.90px;background-color:#e088d0"><span class="tl">0.2</span><span class="br">0.3</span></div><div class="c" style="left:137.70px;top:275.40px;width:45.90px;height:45.90px;background-color:#e000c8"><span class="tl">0.3</span><span class="br">0.3</span></div><div class="c" style="left:183.60px;top:275.40px;width:45.90px;height:45.90px;background-color:#d098d0"><span class="tl">0.4</span><span class="br">0.3</span></div><div class="c" style="left:229.50px;top:275.40px;width:45.90px;height:45.90px;background-color:#b840c8"><span class="tl">0.5</span><span class="br">0.3</span></div><div class="c" style="left:275.40px;top:275.40px;width:45.90px;height:45.90px;background-color:#b098c8"><span class="tl">0.6</span><span class="br">0.3</span></div><div class="c" style="left:321.30px;top:275.40px;width:45.90px;height:45.90px;background-color:#6860c8"><span class="tl">0.7</span><span class="br">0.3</span></div><div class="c" style="left:367.20px;top:275.40px;width:45.90px;height:45.90px;background-color:#80a0d0"><span class="tl">0.8</span><span class="br">0.3</span></div><div class="c" style="left:413.10px;top:275.40px;width:45.90px;height:45.90px;background-color:#0078c8"><span class="tl">0.9</span><span class="br">0.3</span></div><div class="c" style="left:0.00px;top:321.30px;width:45.90px;height:45.90px;background-color:#f000d0"><span class="tl">0.0</span><span class="br">0.2</span></div><div class="c" style="left:45.90px;top:321.30px;width:45.90px;height:45.90px;background-color:#e080d0"><span class="tl">0.1</span><span class="br">0.2</span></div><div class="c" style="left:91.80px;top:321.30px;width:45.90px;height:45.90px;background-color:#e000d0"><span class="tl">0.2</span><span class="br">0.2</span></div><div class="c" style="left:137.70px;top:321.30px;width:45.90px;height:45.90px;background-color:#d888d8"><span class="tl">0.3</span><span class="br">0.2</span></div><div class="c" style="left:183.60px;top:321.30px;width:45.90px;height:45.90px;background-color:#c800d0"><span class="tl">0.4</span><span class="br">0.2</span></div><div class="c" style="left:229.50px;top:321.30px;width:45.90px;height:45.90px;background-color:#c098d0"><span class="tl">0.5</span><span class="br">0.2</span></div><div class="c" style="left:275.40px;top:321.30px;width:45.90px;height:45.90px;background-color:#9030d0"><span class="tl">0.6</span><span class="br">0.2</span></div><div class="c" style="left:321.30px;top:321.30px;width:45.90px;height:45.90px;background-color:#b0a0d0"><span class="tl">0.7</span><span class="br">0.2</span></div><div class="c" style="left:367.20px;top:321.30px;width:45.90px;height:45.90px;background-color:#0050d0"><span class="tl">0.8</span><span class="br">0.2</span></div><div class="c" style="left:413.10px;top:321.30px;width:45.90px;height:45.90px;background-color:#60a0d8"><span class="tl">0.9</span><span class="br">0.2</span></div><div class="c" style="left:0.00px;top:367.20px;width:45.90px;height:45.90px;background-color:#e888d8"><span class="tl">0.0</span><span class="br">0.1</span></div><div class="c" style="left:45.90px;top:367.20px;width:45.90px;height:45.90px;background-color:#f000d0"><span class="tl">0.1</span><span class="br">0.1</span></div><div class="c" style="left:91.80px;top:367.20px;width:45.90px;height:45.90px;background-color:#e088d8"><span class="tl">0.2</span><span class="br">0.1</span></div><div class="c" style="left:137.70px;top:367.20px;width:45.90px;height:45.90px;background-color:#e000d8"><span class="tl">0.3</span><span class="br">0.1</span></div><div class="c" style="left:183.60px;top:367.20px;width:45.90px;height:45.90px;background-color:#d090d8"><span class="tl">0.4</span><span class="br">0.1</span></div><div class="c" style="left:229.50px;top:367.20px;width:45.90px;height:45.90px;background-color:#b000d0"><span class="tl">0.5</span><span class="br">0.1</span></div><div class="c" style="left:275.40px;top:367.20px;width:45.90px;height:45.90px;background-color:#b090d8"><span class="tl">0.6</span><span class="br">0.1</span></div><div class="c" style="left:321.30px;top:367.20px;width:45.90px;height:45.90px;background-color:#6010d0"><span class="tl">0.7</span><span class="br">0.1</span></div><div class="c" style="left:367.20px;top:367.20px;width:45.90px;height:45.90px;background-color:#8088d8"><span class="tl">0.8</span><span class="br">0.1</span></div><div class="c" style="left:413.10px;top:367.20px;width:45.90px;height:45.90px;background-color:#0030d8"><span class="tl">0.9</span><span class="br">0.1</span></div><div class="c" style="left:0.00px;top:413.10px;width:45.90px;height:45.90px;background-color:#f000d8"><span class="tl">0.0</span><span class="br">0.0</span></div><div class="c" style="left:45.90px;top:413.10px;width:45.90px;height:45.90px;background-color:#e888d8"><span class="tl">0.1</span><span class="br">0.0</span></div><div class="c" style="left:91.80px;top:413.10px;width:45.90px;height:45.90px;background-color:#e800d8"><span class="tl">0.2</span><span class="br">0.0</span></div><div class="c" style="left:137.70px;top:413.10px;width:45.90px;height:45.90px;background-color:#d888e0"><span class="tl">0.3</span><span class="br">0.0</span></div><div class="c" style="left:183.60px;top:413.10px;width:45.90px;height:45.90px;background-color:#c800d8"><span class="tl">0.4</span><span class="br">0.0</span></div><div class="c" style="left:229.50px;top:413.10px;width:45.90px;height:45.90px;background-color:#c098e0"><span class="tl">0.5</span><span class="br">0.0</span></div><div class="c" style="left:275.40px;top:413.10px;width:45.90px;height:45.90px;background-color:#a000d8"><span class="tl">0.6</span><span class="br">0.0</span></div><div class="c" style="left:321.30px;top:413.10px;width:45.90px;height:45.90px;background-color:#b080e0"><span class="tl">0.7</span><span class="br">0.0</span></div><div class="c" style="left:367.20px;top:413.10px;width:45.90px;height:45.90px;background-color:#2000d8"><span class="tl">0.8</span><span class="br">0.0</span></div><div class="c" style="left:413.10px;top:413.10px;width:45.90px;height:45.90px;background-color:#7080e0"><span class="tl">0.9</span><span class="br">0.0</span></div><div class="gl"></div><span class="big" style="left:8.5px;top:13px">0,1</span><span class="big" style="left:422.1px;top:13px">1,1</span><span class="big" style="left:8.5px;top:426.1px">0,0</span><span class="big" style="left:422.1px;top:426.1px">1,0</span></div>
<div class="lbl" style="left:40px;top:540px;width:145px;height:23px;line-height:23px;font-size:12px;font-weight:bold;padding:0 0 0 6px;background:#1f1f1f">USE_PROFILE_COLOR</div>
<div class="g" style="left:39px;top:568px;width:459.0px;height:459.0px"><div class="c" style="left:0.00px;top:0.00px;width:45.90px;height:45.90px;background-color:#e85878"><span class="tl">0.0</span><span class="br">0.9</span></div><div class="c" style="left:45.90px;top:0.00px;width:45.90px;height:45.90px;background-color:#e01838"><span class="tl">0.1</span><span class="br">0.9</span></div><div class="c" style="left:91.80px;top:0.00px;width:45.90px;height:45.90px;background-color:#d86868"><span class="tl">0.2</span><span class="br">0.9</span></div><div class="c" style="left:137.70px;top:0.00px;width:45.90px;height:45.90px;background-color:#b04830"><span class="tl">0.3</span><span class="br">0.9</span></div><div class="c" style="left:183.60px;top:0.00px;width:45.90px;height:45.90px;background-color:#b08860"><span class="tl">0.4</span><span class="br">0.9</span></div><div class="c" style="left:229.50px;top:0.00px;width:45.90px;height:45.90px;background-color:#787020"><span class="tl">0.5</span><span class="br">0.9</span></div><div class="c" style="left:275.40px;top:0.00px;width:45.90px;height:45.90px;background-color:#88a058"><span class="tl">0.6</span><span class="br">0.9</span></div><div class="c" style="left:321.30px;top:0.00px;width:45.90px;height:45.90px;background-color:#409818"><span class="tl">0.7</span><span class="br">0.9</span></div><div class="c" style="left:367.20px;top:0.00px;width:45.90px;height:45.90px;background-color:#58c048"><span class="tl">0.8</span><span class="br">0.9</span></div><div class="c" style="left:413.10px;top:0.00px;width:45.90px;height:45.90px;background-color:#00c000"><span class="tl">0.9</span><span class="br">0.9</span></div><div class="c" style="left:0.00px;top:45.90px;width:45.90px;height:45.90px;background-color:#f00850"><span class="tl">0.0</span><span class="br">0.8</span></div><div class="c" style="left:45.90px;top:45.90px;width:45.90px;height:45.90px;background-color:#e05080"><span class="tl">0.1</span><span class="br">0.8</span></div><div class="c" style="left:91.80px;top:45.90px;width:45.90px;height:45.90px;background-color:#c82048"><span class="tl">0.2</span><span class="br">0.8</span></div><div class="c" style="left:137.70px;top:45.90px;width:45.90px;height:45.90px;background-color:#c07078"><span class="tl">0.3</span><span class="br">0.8</span></div><div class="c" style="left:183.60px;top:45.90px;width:45.90px;height:45.90px;background-color:#884838"><span class="tl">0.4</span><span class="br">0.8</span></div><div class="c" style="left:229.50px;top:45.90px;width:45.90px;height:45.90px;background-color:#a09070"><span class="tl">0.5</span><span class="br">0.8</span></div><div class="c" style="left:275.40px;top:45.90px;width:45.90px;height:45.90px;background-color:#587830"><span class="tl">0.6</span><span class="br">0.8</span></div><div class="c" style="left:321.30px;top:45.90px;width:45.90px;height:45.90px;background-color:#70a860"><span class="tl">0.7</span><span class="br">0.8</span></div><div class="c" style="left:367.20px;top:45.90px;width:45.90px;height:45.90px;background-color:#189828"><span class="tl">0.8</span><span class="br">0.8</span></div><div class="c" style="left:413.10px;top:45.90px;width:45.90px;height:45.90px;background-color:#48c860"><span class="tl">0.9</span><span class="br">0.8</span></div><div class="c" style="left:0.00px;top:91.80px;width:45.90px;height:45.90px;background-color:#e85890"><span class="tl">0.0</span><span class="br">0.7</span></div><div class="c" style="left:45.90px;top:91.80px;width:45.90px;height:45.90px;background-color:#e01060"><span class="tl">0.1</span><span class="br">0.7</span></div><div class="c" style="left:91.80px;top:91.80px;width:45.90px;height:45.90px;background-color:#d05880"><span class="tl">0.2</span><span class="br">0.7</span></div><div class="c" style="left:137.70px;top:91.80px;width:45.90px;height:45.90px;background-color:#a83060"><span class="tl">0.3</span><span class="br">0.7</span></div><div class="c" style="left:183.60px;top:91.80px;width:45.90px;height:45.90px;background-color:#a87880"><span class="tl">0.4</span><span class="br">0.7</span></div><div class="c" style="left:229.50px;top:91.80px;width:45.90px;height:45.90px;background-color:#705050"><span class="tl">0.5</span><span class="br">0.7</span></div><div class="c" style="left:275.40px;top:91.80px;width:45.90px;height:45.90px;background-color:#889078"><span class="tl">0.6</span><span class="br">0.7</span></div><div class="c" style="left:321.30px;top:91.80px;width:45.90px;height:45.90px;background-color:#387848"><span class="tl">0.7</span><span class="br">0.7</span></div><div class="c" style="left:367.20px;top:91.80px;width:45.90px;height:45.90px;background-color:#58a070"><span class="tl">0.8</span><span class="br">0.7</span></div><div class="c" style="left:413.10px;top:91.80px;width:45.90px;height:45.90px;background-color:#089038"><span class="tl">0.9</span><span class="br">0.7</span></div><div class="c" style="left:0.00px;top:137.70px;width:45.90px;height:45.90px;background-color:#f00880"><span class="tl">0.0</span><span class="br">0.6</span></div><div class="c" style="left:45.90px;top:137.70px;width:45.90px;height:45.90px;background-color:#e050a0"><span class="tl">0.1</span><span class="br">0.6</span></div><div class="c" style="left:91.80px;top:137.70px;width:45.90px;height:45.90px;background-color:#c81878"><span class="tl">0.2</span><span class="br">0.6</span></div><div class="c" style="left:137.70px;top:137.70px;width:45.90px;height:45.90px;background-color:#b06090"><span class="tl">0.3</span><span class="br">0.6</span></div><div class="c" style="left:183.60px;top:137.70px;width:45.90px;height:45.90px;background-color:#883068"><span class="tl">0.4</span><span class="br">0.6</span></div><div class="c" style="left:229.50px;top:137.70px;width:45.90px;height:45.90px;background-color:#987888"><span class="tl">0.5</span><span class="br">0.6</span></div><div class="c" style="left:275.40px;top:137.70px;width:45.90px;height:45.90px;background-color:#505060"><span class="tl">0.6</span><span class="br">0.6</span></div><div class="c" style="left:321.30px;top:137.70px;width:45.90px;height:45.90px;background-color:#688880"><span class="tl">0.7</span><span class="br">0.6</span></div><div class="c" style="left:367.20px;top:137.70px;width:45.90px;height:45.90px;background-color:#187858"><span class="tl">0.8</span><span class="br">0.6</span></div><div class="c" style="left:413.10px;top:137.70px;width:45.90px;height:45.90px;background-color:#40a080"><span class="tl">0.9</span><span class="br">0.6</span></div><div class="c" style="left:0.00px;top:183.60px;width:45.90px;height:45.90px;background-color:#f040a8"><span class="tl">0.0</span><span class="br">0.5</span></div><div class="c" style="left:45.90px;top:183.60px;width:45.90px;height:45.90px;background-color:#e00890"><span class="tl">0.1</span><span class="br">0.5</span></div><div class="c" style="left:91.80px;top:183.60px;width:45.90px;height:45.90px;background-color:#d058a8"><span class="tl">0.2</span><span class="br">0.5</span></div><div class="c" style="left:137.70px;top:183.60px;width:45.90px;height:45.90px;background-color:#a82088"><span class="tl">0.3</span><span class="br">0.5</span></div><div class="c" style="left:183.60px;top:183.60px;width:45.90px;height:45.90px;background-color:#a870a8"><span class="tl">0.4</span><span class="br">0.5</span></div><div class="c" style="left:229.50px;top:183.60px;width:45.90px;height:45.90px;background-color:#703880"><span class="tl">0.5</span><span class="br">0.5</span></div><div class="c" style="left:275.40px;top:183.60px;width:45.90px;height:45.90px;background-color:#8878a0"><span class="tl">0.6</span><span class="br">0.5</span></div><div class="c" style="left:321.30px;top:183.60px;width:45.90px;height:45.90px;background-color:#385078"><span class="tl">0.7</span><span class="br">0.5</span></div><div class="c" style="left:367.20px;top:183.60px;width:45.90px;height:45.90px;background-color:#5888a0"><span class="tl">0.8</span><span class="br">0.5</span></div><div class="c" style="left:413.10px;top:183.60px;width:45.90px;height:45.90px;background-color:#086878"><span class="tl">0.9</span><span class="br">0.5</span></div><div class="c" style="left:0.00px;top:229.50px;width:45.90px;height:45.90px;background-color:#f000b0"><span class="tl">0.0</span><span class="br">0.4</span></div><div class="c" style="left:45.90px;top:229.50px;width:45.90px;height:45.90px;background-color:#e848b8"><span class="tl">0.1</span><span class="br">0.4</span></div><div class="c" style="left:91.80px;top:229.50px;width:45.90px;height:45.90px;background-color:#c818a0"><span class="tl">0.2</span><span class="br">0.4</span></div><div class="c" style="left:137.70px;top:229.50px;width:45.90px;height:45.90px;background-color:#b860b8"><span class="tl">0.3</span><span class="br">0.4</span></div><div class="c" style="left:183.60px;top:229.50px;width:45.90px;height:45.90px;background-color:#882898"><span class="tl">0.4</span><span class="br">0.4</span></div><div class="c" style="left:229.50px;top:229.50px;width:45.90px;height:45.90px;background-color:#a070b0"><span class="tl">0.5</span><span class="br">0.4</span></div><div class="c" style="left:275.40px;top:229.50px;width:45.90px;height:45.90px;background-color:#503898"><span class="tl">0.6</span><span class="br">0.4</span></div><div class="c" style="left:321.30px;top:229.50px;width:45.90px;height:45.90px;background-color:#7078b0"><span class="tl">0.7</span><span class="br">0.4</span></div><div class="c" style="left:367.20px;top:229.50px;width:45.90px;height:45.90px;background-color:#184898"><span class="tl">0.8</span><span class="br">0.4</span></div><div class="c" style="left:413.10px;top:229.50px;width:45.90px;height:45.90px;background-color:#4890b8"><span class="tl">0.9</span><span class="br">0.4</span></div><div class="c" style="left:0.00px;top:275.40px;width:45.90px;height:45.90px;background-color:#e858c8"><span class="tl">0.0</span><span class="br">0.3</span></div><div class="c" style="left:45.90px;top:275.40px;width:45.90px;height:45.90px;background-color:#e000b8"><span class="tl">0.1</span><span class="br">0.3</span></div><div class="c" style="left:91.80px;top:275.40px;width:45.90px;height:45.90px;background-color:#d858c8"><span class="tl">0.2</span><span class="br">0.3</span></div><div class="c" style="left:137.70px;top:275.40px;width:45.90px;height:45.90px;background-color:#a818b8"><span class="tl">0.3</span><span class="br">0.3</span></div><div class="c" style="left:183.60px;top:275.40px;width:45.90px;height:45.90px;background-color:#b068c8"><span class="tl">0.4</span><span class="br">0.3</span></div><div class="c" style="left:229.50px;top:275.40px;width:45.90px;height:45.90px;background-color:#6028b0"><span class="tl">0.5</span><span class="br">0.3</span></div><div class="c" style="left:275.40px;top:275.40px;width:45.90px;height:45.90px;background-color:#8868c8"><span class="tl">0.6</span><span class="br">0.3</span></div><div class="c" style="left:321.30px;top:275.40px;width:45.90px;height:45.90px;background-color:#3830a8"><span class="tl">0.7</span><span class="br">0.3</span></div><div class="c" style="left:367.20px;top:275.40px;width:45.90px;height:45.90px;background-color:#5878c8"><span class="tl">0.8</span><span class="br">0.3</span></div><div class="c" style="left:413.10px;top:275.40px;width:45.90px;height:45.90px;background-color:#0848b0"><span class="tl">0.9</span><span class="br">0.3</span></div><div class="c" style="left:0.00px;top:321.30px;width:45.90px;height:45.90px;background-color:#f000d0"><span class="tl">0.0</span><span class="br">0.2</span></div><div class="c" style="left:45.90px;top:321.30px;width:45.90px;height:45.90px;background-color:#e860d0"><span class="tl">0.1</span><span class="br">0.2</span></div><div class="c" style="left:91.80px;top:321.30px;width:45.90px;height:45.90px;background-color:#c800d0"><span class="tl">0.2</span><span class="br">0.2</span></div><div class="c" style="left:137.70px;top:321.30px;width:45.90px;height:45.90px;background-color:#c060d8"><span class="tl">0.3</span><span class="br">0.2</span></div><div class="c" style="left:183.60px;top:321.30px;width:45.90px;height:45.90px;background-color:#8000c8"><span class="tl">0.4</span><span class="br">0.2</span></div><div class="c" style="left:229.50px;top:321.30px;width:45.90px;height:45.90px;background-color:#a068d8"><span class="tl">0.5</span><span class="br">0.2</span></div><div class="c" style="left:275.40px;top:321.30px;width:45.90px;height:45.90px;background-color:#4018c8"><span class="tl">0.6</span><span class="br">0.2</span></div><div class="c" style="left:321.30px;top:321.30px;width:45.90px;height:45.90px;background-color:#7868d8"><span class="tl">0.7</span><span class="br">0.2</span></div><div class="c" style="left:367.20px;top:321.30px;width:45.90px;height:45.90px;background-color:#1030c0"><span class="tl">0.8</span><span class="br">0.2</span></div><div class="c" style="left:413.10px;top:321.30px;width:45.90px;height:45.90px;background-color:#5070d8"><span class="tl">0.9</span><span class="br">0.2</span></div><div class="c" style="left:0.00px;top:367.20px;width:45.90px;height:45.90px;background-color:#e860d0"><span class="tl">0.0</span><span class="br">0.1</span></div><div class="c" style="left:45.90px;top:367.20px;width:45.90px;height:45.90px;background-color:#e000d0"><span class="tl">0.1</span><span class="br">0.1</span></div><div class="c" style="left:91.80px;top:367.20px;width:45.90px;height:45.90px;background-color:#d860d8"><span class="tl">0.2</span><span class="br">0.1</span></div><div class="c" style="left:137.70px;top:367.20px;width:45.90px;height:45.90px;background-color:#a800d8"><span class="tl">0.3</span><span class="br">0.1</span></div><div class="c" style="left:183.60px;top:367.20px;width:45.90px;height:45.90px;background-color:#b068d8"><span class="tl">0.4</span><span class="br">0.1</span></div><div class="c" style="left:229.50px;top:367.20px;width:45.90px;height:45.90px;background-color:#6000d8"><span class="tl">0.5</span><span class="br">0.1</span></div><div class="c" style="left:275.40px;top:367.20px;width:45.90px;height:45.90px;background-color:#8860d8"><span class="tl">0.6</span><span class="br">0.1</span></div><div class="c" style="left:321.30px;top:367.20px;width:45.90px;height:45.90px;background-color:#3000d8"><span class="tl">0.7</span><span class="br">0.1</span></div><div class="c" style="left:367.20px;top:367.20px;width:45.90px;height:45.90px;background-color:#6060d8"><span class="tl">0.8</span><span class="br">0.1</span></div><div class="c" style="left:413.10px;top:367.20px;width:45.90px;height:45.90px;background-color:#0818d8"><span class="tl">0.9</span><span class="br">0.1</span></div><div class="c" style="left:0.00px;top:413.10px;width:45.90px;height:45.90px;background-color:#f000d8"><span class="tl">0.0</span><span class="br">0.0</span></div><div class="c" style="left:45.90px;top:413.10px;width:45.90px;height:45.90px;background-color:#e860d8"><span class="tl">0.1</span><span class="br">0.0</span></div><div class="c" style="left:91.80px;top:413.10px;width:45.90px;height:45.90px;background-color:#d000d8"><span class="tl">0.2</span><span class="br">0.0</span></div><div class="c" style="left:137.70px;top:413.10px;width:45.90px;height:45.90px;background-color:#c060e0"><span class="tl">0.3</span><span class="br">0.0</span></div><div class="c" style="left:183.60px;top:413.10px;width:45.90px;height:45.90px;background-color:#8800d8"><span class="tl">0.4</span><span class="br">0.0</span></div><div class="c" style="left:229.50px;top:413.10px;width:45.90px;height:45.90px;background-color:#a868e0"><span class="tl">0.5</span><span class="br">0.0</span></div><div class="c" style="left:275.40px;top:413.10px;width:45.90px;height:45.90px;background-color:#4800d8"><span class="tl">0.6</span><span class="br">0.0</span></div><div class="c" style="left:321.30px;top:413.10px;width:45.90px;height:45.90px;background-color:#7858e0"><span class="tl">0.7</span><span class="br">0.0</span></div><div class="c" style="left:367.20px;top:413.10px;width:45.90px;height:45.90px;background-color:#2000d8"><span class="tl">0.8</span><span class="br">0.0</span></div><div class="c" style="left:413.10px;top:413.10px;width:45.90px;height:45.90px;background-color:#5050e0"><span class="tl">0.9</span><span class="br">0.0</span></div><div class="gl"></div><span class="big" style="left:8.5px;top:13px">0,1</span><span class="big" style="left:422.1px;top:13px">1,1</span><span class="big" style="left:8.5px;top:426.1px">0,0</span><span class="big" style="left:422.1px;top:426.1px">1,0</span></div>
<div class="lbl" style="left:40px;top:1030px;width:50px;height:25px;line-height:25px;font-size:12.6px;font-weight:bold;letter-spacing:0.4px;padding:0 0 0 6px;background:#1f1f1f">NONE</div>
<div class="a" style="left:9px;top:29px;width:1857px;height:17px;background:rgba(0,0,0,.42)"></div>
<div class="lbl" style="left:11px;top:32px;width:76px;height:19px;line-height:19px;font-size:14px;-webkit-text-stroke:0.35px #dcdcdc;color:#dcdcdc;padding:0 0 0 2px;background:#1f1f1f">Perspective</div>
<div class="lbl" style="left:874px;top:32px;width:122px;height:19px;line-height:19px;font-size:14px;-webkit-text-stroke:0.35px #dcdcdc;color:#dcdcdc;padding:0 0 0 2px;background:#1f1f1f">Default Camera</div>
<svg class="a" style="left:976px;top:33px" width="20" height="16" viewBox="976 33 20 16"><path d="M979 39L979 36.5L986 36.5L986 39M978 39.5L990 39.5L990 46L978 46Z" stroke="#8f9ac8" stroke-width="1.4" fill="none"/><path d="M991 42L994 40L994 45Z" fill="#8f9ac8"/></svg>
<div class="lbl" style="left:11.5px;top:379px;width:58px;height:19px;line-height:19px;font-size:14px;-webkit-text-stroke:0.35px #dcdcdc;color:#dcdcdc;padding:0 0 0 2px;background:rgba(0,0,0,.25)">Move</div>
<svg class="a" style="left:50px;top:381px" width="16" height="16" viewBox="50 381 16 16"><path d="M58.5 382.5L58.5 395.5M52 389L65 389" stroke="#bbb" stroke-width="1"/><path d="M58.5 382L56.5 384.5L60.5 384.5ZM58.5 396L56.5 393.5L60.5 393.5ZM51.5 389L54 387L54 391ZM65.5 389L63 387L63 391Z" fill="#bbb"/></svg>
<div class="a" style="left:9px;top:1090px;width:1857px;height:18px;background:rgba(0,0,0,.36)"></div>
<div class="lbl" style="left:10px;top:1086px;height:18px;line-height:20px;width:152px;font-size:14px;-webkit-text-stroke:0.35px #dcdcdc;color:#dcdcdc;padding:0 3px;background:rgba(20,20,20,.5)">View Transform: Scene</div>
<div class="lbl" style="left:1726px;top:1086px;height:18px;line-height:20px;width:138px;white-space:nowrap;font-size:14px;-webkit-text-stroke:0.35px #dcdcdc;color:#dcdcdc;padding:0 3px;background:rgba(20,20,20,.5)">Grid Spacing : 50 cm</div>
</div>
<div class="a" style="left:1867px;top:0;width:51px;height:1112px;background:#272727"></div>
<div class="a" style="left:1917px;top:0;width:1px;height:1112px;background:#1a1a1a"></div>
<div class="a" style="left:1918px;top:0;width:588px;height:1112px;background:#2b2b2b"></div>
<div class="a" style="left:1918px;top:0;width:588px;height:20px;background:#262626"></div>
<span class="a" style="left:1956px;top:-2px;font-size:14px;color:#c9c9c9">File</span>
<span class="a" style="left:1995px;top:-2px;font-size:14px;color:#c9c9c9">Edit</span>
<span class="a" style="left:2036px;top:-2px;font-size:14px;color:#c9c9c9">View</span>
<span class="a" style="left:2083px;top:-2px;font-size:14px;color:#c9c9c9">Object</span>
<span class="a" style="left:2142px;top:-2px;font-size:14px;color:#c9c9c9">Tags</span>
<span class="a" style="left:2186px;top:-2px;font-size:14px;color:#c9c9c9">Bookmarks</span>
<div class="a" style="left:1918px;top:22px;width:275px;height:25px;background:#1f1f1f"></div>
<div class="a" style="left:2193px;top:20px;width:1px;height:500px;background:#1c1c1c"></div>
<span class="a" style="left:1964px;top:27px;font-size:13.6px;color:#f0b428">C++ SDK: Ocio Node 2025</span>
<div class="a" style="left:1918px;top:520px;width:588px;height:32px;background:#1d1d1d"></div>
<div class="a" style="left:1918px;top:522px;width:89px;height:30px;background:#2a2a2a;border-radius:4px 4px 0 0"></div>
<span class="a" style="left:1933px;top:529px;font-size:14px;color:#e0e0e0">Attributes</span>
<span class="a" style="left:2022px;top:529px;font-size:14px;color:#a8a8a8">Layers</span>
<div class="a" style="left:1918px;top:580px;width:588px;height:1px;background:#1c1c1c"></div>
<span class="a" style="left:1957px;top:557px;font-size:14px;color:#c9c9c9">Mode</span>
<span class="a" style="left:2010px;top:557px;font-size:14px;color:#c9c9c9">Edit</span>
<span class="a" style="left:2051px;top:557px;font-size:14px;color:#c9c9c9">User Data</span>
<span class="a" style="left:1959px;top:590px;font-size:13.6px;color:#c9c9c9">Ocio Node 2025 [C++ SDK: Ocio Node 2025]</span>
<div class="a" style="left:2385px;top:588px;width:121px;height:23px;background:#333;border-radius:11px 0 0 11px"></div>
<span class="a" style="left:2394px;top:590px;font-size:14px;color:#c9c9c9">Custom</span>
<div class="a" style="left:1929px;top:618px;width:53px;height:23px;background:#363636;border-radius:4px;font-size:14px;line-height:23px;text-align:center;color:#d8d8d8">Basic</div>
<div class="a" style="left:1988px;top:618px;width:96px;height:23px;background:#363636;border-radius:4px;font-size:14px;line-height:23px;text-align:center;color:#d8d8d8">Coordinates</div>
<div class="a" style="left:2089px;top:618px;width:62px;height:23px;background:#5558a0;border-radius:4px;font-size:14px;line-height:23px;text-align:center;color:#d8d8d8">Object</div>
<span class="a" style="left:1929px;top:651px;font-size:15px;color:#f0f0f0">Object Properties</span>
<span class="a" style="left:1956px;top:679px;font-size:14px;color:#c9c9c9">Color</span>
<div class="a" style="left:2007px;top:677px;width:83px;height:19px;background:#ff0000;border:1px solid #111"></div>
<svg class="a" style="left:1866px;top:0" width="52" height="720" viewBox="1866 0 52 720"><rect x="1871" y="0" width="45" height="43" rx="5" fill="#3a3a3a"/><rect x="1871" y="56" width="45" height="135" rx="5" fill="#3a3a3a"/><rect x="1871" y="99.5" width="45" height="1" fill="#262626"/><rect x="1871" y="144.5" width="45" height="1" fill="#262626"/><rect x="1871" y="204" width="45" height="133" rx="5" fill="#3a3a3a"/><rect x="1871" y="246.5" width="45" height="1" fill="#262626"/><rect x="1871" y="291.5" width="45" height="1" fill="#262626"/><rect x="1871" y="344" width="45" height="89" rx="5" fill="#3a3a3a"/><rect x="1871" y="386.5" width="45" height="1" fill="#262626"/><rect x="1871" y="439" width="45" height="43" rx="5" fill="#3a3a3a"/><rect x="1871" y="496" width="45" height="135" rx="5" fill="#3a3a3a"/><rect x="1871" y="540.5" width="45" height="1" fill="#262626"/><rect x="1871" y="585.5" width="45" height="1" fill="#262626"/><rect x="1871" y="656" width="45" height="44" rx="5" fill="#3a3a3a"/><path d="M1915 92L1915 98L1909 98Z" fill="#8c8c8c"/><path d="M1915 137L1915 143L1909 143Z" fill="#8c8c8c"/><path d="M1915 183L1915 189L1909 189Z" fill="#8c8c8c"/><path d="M1915 239L1915 245L1909 245Z" fill="#8c8c8c"/><path d="M1915 284L1915 290L1909 290Z" fill="#8c8c8c"/><path d="M1915 329L1915 335L1909 335Z" fill="#8c8c8c"/><path d="M1915 379L1915 385L1909 385Z" fill="#8c8c8c"/><path d="M1915 425L1915 431L1909 431Z" fill="#8c8c8c"/><path d="M1915 474L1915 480L1909 480Z" fill="#8c8c8c"/><path d="M1915 533L1915 539L1909 539Z" fill="#8c8c8c"/><path d="M1915 578L1915 584L1909 584Z" fill="#8c8c8c"/><path d="M1915 623L1915 629L1909 629Z" fill="#8c8c8c"/><path d="M1915 692L1915 698L1909 698Z" fill="#8c8c8c"/><g stroke="#c9cdf6" stroke-width="2.6" fill="none" stroke-linecap="round" stroke-linejoin="round"><path d="M1884 9L1884 30L1907 30"/><path d="M1879 13L1884 8L1889 13"/><path d="M1903 25L1908 30L1903 35"/></g><circle cx="1900" cy="14.5" r="7.8" fill="#c9cdf6"/><rect x="1882" y="67" width="23" height="23" fill="none" stroke="#8fdcfb" stroke-width="2.4"/><path d="M1893.5 108L1906 115.5L1906 130.5L1893.5 138L1881 130.5L1881 115.5Z" fill="#8fdcfb"/><path d="M1881 115.5L1893.5 123L1906 115.5M1893.5 123L1893.5 138" stroke="#3a3a3a" stroke-width="1.6" fill="none"/><g fill="#8fdcfb"><rect x="1880.5" y="149" width="26" height="3.6"/><rect x="1880.5" y="149" width="3" height="12"/><rect x="1903.5" y="149" width="3" height="12"/><rect x="1892" y="150" width="3" height="31"/><rect x="1886" y="180" width="15" height="3"/></g><circle cx="1893.7" cy="226" r="7.4" fill="#6ee38c"/><g stroke="#6ee38c" stroke-width="1.3" fill="none"><path d="M1882 219.5L1893.7 213L1905.3 219.5L1905.3 232.5L1893.7 239L1882 232.5Z" stroke-dasharray="3 2.5"/><rect x="1891.4" y="210.7" width="4.6" height="4.6" fill="#3a3a3a"/><rect x="1891.4" y="236.7" width="4.6" height="4.6" fill="#3a3a3a"/><rect x="1879.7" y="217.2" width="4.6" height="4.6" fill="#3a3a3a"/><rect x="1903.0" y="217.2" width="4.6" height="4.6" fill="#3a3a3a"/><rect x="1879.7" y="230.2" width="4.6" height="4.6" fill="#3a3a3a"/><rect x="1903.0" y="230.2" width="4.6" height="4.6" fill="#3a3a3a"/></g><path d="M1886.2 259L1893.7 263.5L1893.7 271.5L1886.2 267Z" fill="#6ee38c"/><path d="M1901.2 259L1893.7 263.5L1893.7 271.5L1901.2 267Z" fill="#4fb96a"/><path d="M1893.7 254.5L1901.2 259L1893.7 263.5L1886.2 259Z" fill="#7deb99"/><path d="M1878.5 272L1886 276.5L1886 284.5L1878.5 280Z" fill="#6ee38c"/><path d="M1893.5 272L1886 276.5L1886 284.5L1893.5 280Z" fill="#4fb96a"/><path d="M1886 267.5L1893.5 272L1886 276.5L1878.5 272Z" fill="#7deb99"/><path d="M1893.9 272L1901.4 276.5L1901.4 284.5L1893.9 280Z" fill="#6ee38c"/><path d="M1908.9 272L1901.4 276.5L1901.4 284.5L1908.9 280Z" fill="#4fb96a"/><path d="M1901.4 267.5L1908.9 272L1901.4 276.5L1893.9 272Z" fill="#7deb99"/><path d="M1893.5 305.5L1903 311L1903 322L1893.5 327.5L1884 322L1884 311Z" fill="#fff" stroke="#fff" stroke-width="3" stroke-linejoin="round"/><circle cx="1893.5" cy="303" r="3.1" fill="#6ee38c"/><circle cx="1893.5" cy="329.5" r="3.1" fill="#6ee38c"/><circle cx="1882" cy="309.7" r="3.1" fill="#6ee38c"/><circle cx="1905" cy="309.7" r="3.1" fill="#6ee38c"/><circle cx="1882" cy="323" r="3.1" fill="#6ee38c"/><circle cx="1905" cy="323" r="3.1" fill="#6ee38c"/><circle cx="1893.5" cy="316.3" r="3.8" fill="#6ee38c" stroke="#3a3a3a" stroke-width="1"/><g stroke="#9b9dff" stroke-width="2.2" fill="none" stroke-linejoin="round"><path d="M1890.5 351.5L1881.5 357.5L1882 365L1886 370L1887 374L1896 380L1905 374C1905 365 1900 357 1890.5 351.5Z"/><path d="M1885.5 359.5C1891 362 1895 368 1896.5 375" stroke-width="1.6"/></g><g stroke="#9b9dff" stroke-width="2.2" fill="none"><path d="M1881.5 398L1881.5 422L1904 422"/></g><path d="M1878 401L1881.5 396L1885 401Z M1901 418.5L1906 422L1901 425.5Z" fill="#9b9dff" stroke="#9b9dff" stroke-width="1.5"/><g stroke="#9b9dff" stroke-width="1.4" fill="none"><path d="M1899.5 396L1907 400.5L1907 408L1899.5 412.5L1892 408L1892 400.5Z M1892 400.5L1899.5 404.5L1907 400.5M1899.5 404.5L1899.5 412.5"/></g><g stroke="#f1aaf3" stroke-width="1.8" fill="none" stroke-linejoin="round"><path d="M1881.5 450L1893.5 456L1893.5 470L1881.5 464Z"/><path d="M1895 446L1906 451L1906 466L1895 461Z"/><path d="M1887 460L1901 452" stroke-width="1.2"/></g><path d="M1893.40 503.30L1897.69 507.55L1903.72 507.58L1903.75 513.61L1908.00 517.90L1903.75 522.19L1903.72 528.22L1897.69 528.25L1893.40 532.50L1889.11 528.25L1883.08 528.22L1883.05 522.19L1878.80 517.90L1883.05 513.61L1883.08 507.58L1889.11 507.55Z" fill="#c6d3fb" stroke="#c6d3fb" stroke-width="1.2" stroke-linejoin="round"/><circle cx="1893.4" cy="517.9" r="9.8" fill="#3a3a3a"/><circle cx="1898.8" cy="514.6" r="6.4" fill="#c6d3fb"/><g stroke="#c6d3fb" stroke-width="1.8" fill="none"><rect x="1879" y="561.5" width="19.5" height="13" rx="1.5"/><path d="M1882 561L1882 554L1893.5 554L1893.5 561"/></g><path d="M1901 565.3L1908.6 558.8L1908.6 571.8Z" fill="#c6d3fb"/><g stroke="#c6d3fb" stroke-width="1.6" fill="none"><path d="M1881 594L1906 594L1904 611.5L1883 611.5Z"/><path d="M1893.5 603L1893.5 622M1889.5 618L1893.5 622L1897.5 618"/></g><path d="M1900 666.5L1893.5 663.5L1880.5 671L1880.5 686.5L1893.5 694L1906.5 686.5L1906.5 676" fill="none" stroke="#c2c2c2" stroke-width="1.4"/><path d="M1890 682.5L1904.5 668" stroke="#f4f4f4" stroke-width="3.6" stroke-linecap="round"/><path d="M1888.5 684L1890.5 680.5L1892 682Z" fill="#f4f4f4"/></svg>
<svg class="a" style="left:1760px;top:0" width="110" height="28" viewBox="1760 0 110 28">
<path d="M1771 15L1774 20C1776 23 1779 24 1781 24C1785 24 1787 21 1787 17L1787 10C1787 9 1785 9 1785 10L1785 15L1784 15L1784 7C1784 6 1782 6 1782 7L1782 14L1781 14L1781 6C1781 5 1779 5 1779 6L1779 14L1778 14L1778 8C1778 7 1776 7 1776 8L1776 17L1774 14C1773 13 1771 13 1771 15Z" fill="#9c9c9c"/>
<path d="M1803.5 5.5L1808.5 10.5L1805 10.5L1805 15L1812 15L1803.5 23L1795 15L1802 15L1802 10.5L1798.5 10.5Z" fill="#9c9c9c"/>
<path d="M1833 8.5A8 8 0 1 1 1823 8.5" stroke="#9c9c9c" stroke-width="1.6" fill="none"/><circle cx="1828.5" cy="14.5" r="2.3" fill="#9c9c9c"/><circle cx="1833.3" cy="7.6" r="2.5" fill="#9c9c9c"/>
<rect x="1845.5" y="6.5" width="16" height="16" rx="1.5" stroke="#9c9c9c" stroke-width="1.6" fill="none"/><path d="M1846 12.5L1855.5 12.5L1855.5 22" stroke="#9c9c9c" stroke-width="1.5" fill="none"/>
</svg>
<svg class="a" style="left:1800px;top:30px" width="60" height="60" viewBox="1800 30 60 60">
<path d="M1823.2 70.5L1823.2 49" stroke="#10d040" stroke-width="1.6"/>
<path d="M1823.2 70.5L1838.7 65.6" stroke="#2a6ae0" stroke-width="1.5"/>
<path d="M1823.2 70.5L1838.7 76.5" stroke="#d83a3a" stroke-width="1.2"/>
<path d="M1820.5 37.5L1823.2 42L1826 37.5M1823.2 42L1823.2 46.5" stroke="#10d040" stroke-width="1.3" fill="none"/>
<path d="M1844.5 59.5L1850.5 59.5L1844.5 68.5L1850.5 68.5" stroke="#2a6ae0" stroke-width="1.2" fill="none"/>
<path d="M1844.5 75.5L1850.5 84.5M1850.5 75.5L1844.5 84.5" stroke="#d83a3a" stroke-width="1.5" fill="none"/>
</svg>
<svg class="a" style="left:1918px;top:0" width="588" height="720" viewBox="1918 0 588 720">
<g fill="#a8a8a8"><rect x="1926" y="0" width="17" height="2.2"/><rect x="1926" y="4.5" width="17" height="2.2"/><rect x="1926" y="9" width="17" height="2.2"/></g>
<g stroke="#9a9a9a" stroke-width="1.6" fill="none"><circle cx="2429" cy="4" r="5.6"/><path d="M2433 8.5L2439 14.5"/><path d="M2449 14L2449 3L2456 -2L2463 3L2463 14L2458 14L2458 8L2454 8L2454 14Z"/><path d="M2472 1L2490 1M2475 6L2487 6M2478 11L2484 11" stroke-width="2.2"/><path d="M2500 0L2500 14L2506 14"/></g>
<path d="M1929 22L1929 35.5L1940 35.5" stroke="#555" stroke-width="1" fill="none"/>
<text x="1943" y="42.5" font-size="19" font-family="Liberation Sans" fill="#d0d0d0" stroke="#d0d0d0" stroke-width="0.5">?</text>
<rect x="2139" y="28" width="11" height="12" rx="2" fill="#555"/><path d="M2141.5 37.5L2147.5 30.5" stroke="#1e1e1e" stroke-width="1.4"/>
<circle cx="2162" cy="30" r="4.3" fill="#555"/><circle cx="2162" cy="41" r="4.3" fill="#555"/>
<path d="M2171.5 35L2176 39.5L2186.5 29" stroke="#52d27a" stroke-width="2.6" fill="none"/>
<g fill="#a8a8a8"><rect x="1926" y="560" width="18" height="2.2"/><rect x="1926" y="565.5" width="18" height="2.2"/><rect x="1926" y="571" width="18" height="2.2"/></g>
<g stroke="#9a9a9a" stroke-width="1.7" fill="none" stroke-linecap="square">
<path d="M2323 566L2339 566M2330 558.5L2323 566L2330 573.5"/>
<path d="M2349 566L2364 566M2357 558.5L2364 566L2357 573.5" stroke="#505050"/>
<path d="M2381 559L2381 574M2374 566L2381 559L2388 566"/>
<circle cx="2404" cy="565" r="6"/><path d="M2408.5 569.5L2414 575"/>
<path d="M2422.5 560L2440 560M2425.5 565.5L2437 565.5M2428.5 571L2434 571" stroke-width="1.8"/>
<rect x="2450" y="563.5" width="13" height="10" rx="1.5"/><path d="M2453 563.5L2453 560A3.5 3.5 0 0 1 2460 559.5"/>
<circle cx="2481" cy="566" r="9.5"/><circle cx="2481" cy="566" r="3.8"/>
<path d="M2506 557.5L2499 557.5L2499 574L2506 574"/>
</g>
<circle cx="2456.5" cy="569" r="1.3" fill="#9a9a9a"/>
<text x="1934" y="608.5" font-size="22" font-family="Liberation Sans" fill="#d0d0d0" stroke="#d0d0d0" stroke-width="0.6">?</text>
<path d="M2487 588L2487 610" stroke="#2a2a2a" stroke-width="1"/>
<path d="M2492.5 596L2501.5 596L2497 601.5Z" fill="#a0a0a0"/>
<circle cx="1937.5" cy="688" r="8" fill="#262626"/>
<path d="M1937.5 683L1942.5 688L1937.5 693L1932.5 688Z" stroke="#c8c8c8" stroke-width="1.3" fill="none"/>
<path d="M1998.5 683L2003 688L1998.5 693" stroke="#c8c8c8" stroke-width="1.6" fill="none"/>
<path d="M2104.5 696L2113 687.5M2109.5 684L2116.5 691M2112 686.5L2115 683.5A2.2 2.2 0 0 1 2118 686.5L2115 689.5M2104.5 696L2104.5 692.5" stroke="#9a9a9a" stroke-width="1.7" fill="none"/>
</svg>
</body></html>
